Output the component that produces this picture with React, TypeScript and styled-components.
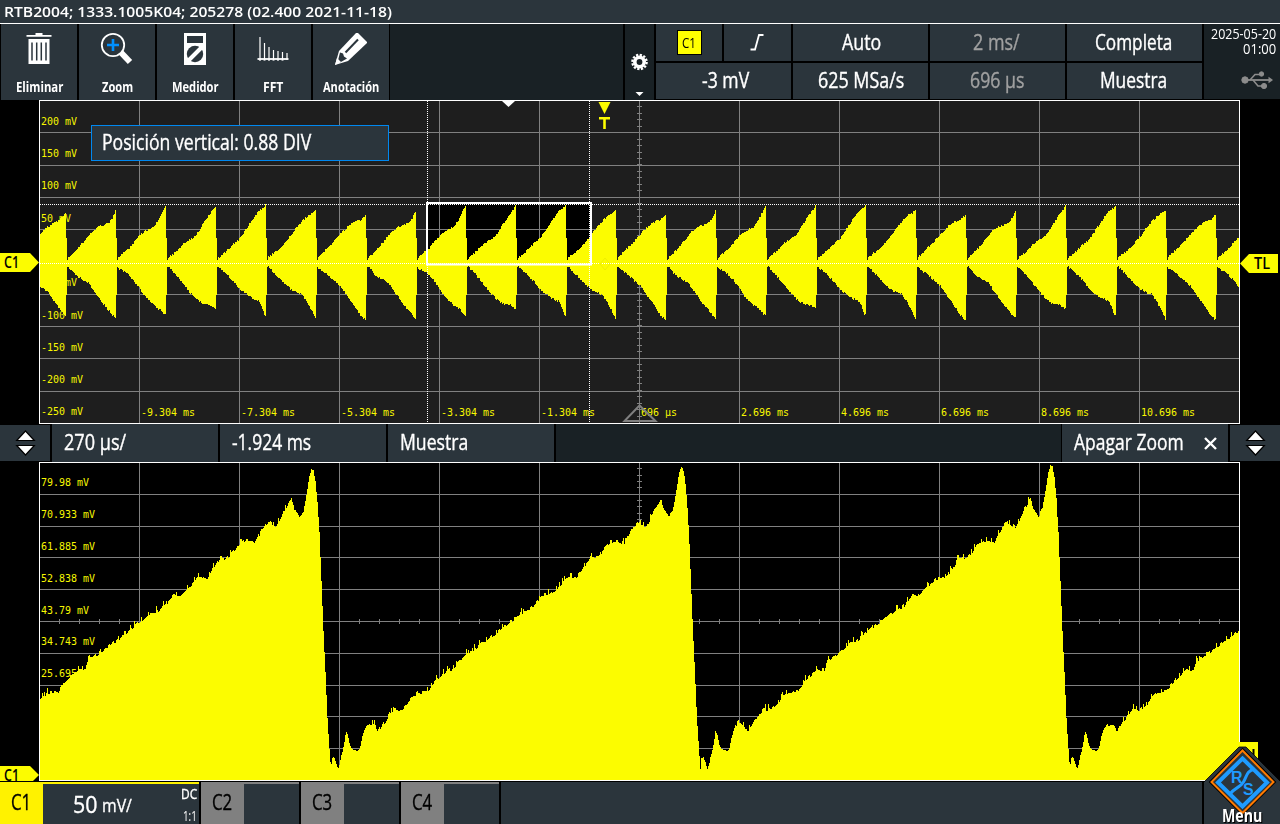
import React, { useLayoutEffect, useRef, useState } from "react";
import styled, { createGlobalStyle } from "styled-components";

const PANEL = "#2b353c";
const DARK = "#192125";
const YELLOW = "#fcfc00";
const GRID = "#808080";

const Global = createGlobalStyle`
  * { box-sizing: border-box; }
  body { margin: 0; background: #000; overflow: hidden; }
`;

/* ---------- text squeezed to a condensed width ---------- */

const FitBox = styled.span<{ $w: number; $size: number; $weight: number; $color: string }>`
  display: inline-block;
  flex: none;
  width: ${(p) => p.$w}px;
  height: ${(p) => p.$size}px;
  line-height: ${(p) => p.$size}px;
  font-family: "Open Sans", "Noto Sans", sans-serif;
  font-size: ${(p) => p.$size}px;
  font-weight: ${(p) => p.$weight};
  color: ${(p) => p.$color};
  white-space: nowrap;
  -webkit-text-stroke: ${(p) => (p.$weight === 500 ? 0.35 : 0)}px currentColor;
`;
const FitInner = styled.span`
  display: inline-block;
  transform-origin: 0 50%;
`;

function Fit({ w, size = 21, weight = 500, color = "#fff", children }: {
  w: number; size?: number; weight?: number; color?: string; children: string;
}) {
  const ref = useRef<HTMLSpanElement>(null);
  const [k, setK] = useState(1);
  useLayoutEffect(() => {
    if (ref.current) setK(w / ref.current.offsetWidth);
  }, [w, children]);
  return (
    <FitBox $w={w} $size={size} $weight={weight} $color={color}>
      <FitInner ref={ref} style={{ transform: `scaleX(${k})` }}>{children}</FitInner>
    </FitBox>
  );
}

/* ---------- layout ---------- */

const Screen = styled.div`
  position: relative;
  width: 1280px;
  height: 824px;
  display: flex;
  flex-direction: column;
  background: #000;
  overflow: hidden;
`;
const TitleBar = styled.header`
  flex: none;
  height: 24px;
  padding: 5px 0 0 4px;
  line-height: 0;
  background: ${PANEL};
  border-bottom: 1px solid #fff;
`;
const Toolbar = styled.div`
  flex: none;
  height: 76px;
  display: flex;
`;
const Tools = styled.div`
  display: flex;
  gap: 2px;
  padding-left: 1px;
`;
const Tool = styled.button`
  width: 76px;
  height: 76px;
  padding: 6px 0 0;
  border: 0;
  background: ${PANEL};
  display: flex;
  flex-direction: column;
  align-items: center;
  gap: 14px;
  line-height: 0;
`;
const Spacer = styled.div`
  width: 233px;
  margin-left: 1px;
  background: ${DARK};
`;
const GearButton = styled.div`
  width: 29px;
  margin: 0 2px;
  background: ${DARK};
`;
const Readouts = styled.div`
  display: grid;
  grid-template-columns: 66px 67px 135px 135px 135px;
  grid-template-rows: 37px 36px;
  gap: 2px;
`;
const Readout = styled.div<{ $span?: number; $shift?: number }>`
  grid-column: span ${(p) => p.$span ?? 1};
  padding: 0 2px 1px ${(p) => p.$shift ?? 0}px;
  background: ${PANEL};
  display: flex;
  align-items: center;
  justify-content: center;
`;
const Source = styled.span`
  width: 25px;
  height: 25px;
  display: flex;
  align-items: center;
  justify-content: center;
  background: #ff0;
  border: 1px solid #000;
`;
const Status = styled.div`
  flex: 1;
  height: 75px;
  margin-left: 2px;
  padding: 2px 4px 0 0;
  background: ${DARK};
  display: flex;
  flex-direction: column;
  align-items: flex-end;
`;
const UsbRow = styled.div`
  margin-top: 14px;
  margin-right: 2px;
`;
const Plot = styled.svg`
  display: block;
  flex: none;
`;
const ZoomBar = styled.div`
  flex: none;
  height: 38px;
  display: flex;
  gap: 2px;
`;
const ArrowCell = styled.div`
  width: 50px;
  height: 36px;
  margin-top: 1px;
  background: ${PANEL};
`;
const ZoomCell = styled.div<{ $left: number }>`
  width: 166px;
  padding: 0 0 2px ${(p) => p.$left}px;
  background: ${PANEL};
  display: flex;
  align-items: center;
`;
const ZoomFill = styled.div`
  flex: 1;
  margin-right: -1px;
  background: ${DARK};
`;
const CloseIcon = styled.svg`
  margin: 2px 0 0 20px;
`;
const Footer = styled.footer`
  flex: 1;
  padding-top: 1px;
  display: flex;
  gap: 2px;
`;
const Channel = styled.div<{ $color: string; $w: number }>`
  width: ${(p) => p.$w}px;
  display: flex;
  background: ${PANEL};
  border-top: 2px solid ${(p) => p.$color};
`;
const ChannelTag = styled.div<{ $color: string }>`
  width: 43px;
  padding: 0 2px 4px 0;
  background: ${(p) => p.$color};
  display: flex;
  align-items: center;
  justify-content: center;
`;
const Scale = styled.div`
  flex: 1;
  display: flex;
  align-items: center;
  gap: 5px;
  padding-left: 30px;
`;
const Unit = styled.span`
  display: flex;
  padding-top: 3px;
`;
const Coupling = styled.div`
  display: flex;
  flex-direction: column;
  align-items: flex-end;
  justify-content: space-between;
  padding: 2px 2px 1px 0;
`;
const FooterFill = styled.div`
  flex: 1;
  background: ${PANEL};
`;
const MenuCell = styled.div`
  width: 76px;
  background: ${PANEL};
`;
const MenuLogo = styled.svg`
  position: absolute;
  left: 1200px;
  top: 744px;
`;
const MenuLabel = styled.div`
  position: absolute;
  left: 1222px;
  top: 807px;
  line-height: 0;
  filter: drop-shadow(1px 1px 0 #000);
`;
const Popup = styled.div`
  position: absolute;
  left: 91px;
  top: 125px;
  width: 298px;
  height: 36px;
  padding: 0 0 2px 10px;
  display: flex;
  align-items: center;
  background: ${PANEL};
  border: 1px solid #0088f0;
`;

/* ---------- traces ---------- */

type Pt = [number, number];

const lerpAt = (pts: Pt[], x: number) => {
  if (x <= pts[0][0]) return pts[0][1];
  for (let i = 1; i < pts.length; i++) {
    if (x <= pts[i][0]) {
      const [x0, y0] = pts[i - 1];
      const [x1, y1] = pts[i];
      return y0 + ((y1 - y0) * (x - x0)) / (x1 - x0);
    }
  }
  return pts[pts.length - 1][1];
};
const noise = (n: number) => {
  const s = Math.sin(n * 127.1 + 11.7) * 43758.5453;
  return s - Math.floor(s);
};

/* upper and lower envelope of one burst, x measured from its start */
const BURSTS: { up: Pt[]; down: Pt[] }[] = [
  { up: [[1, 258], [8, 251], [16, 242], [23, 234], [30, 227], [36, 223], [41, 220], [46, 216], [49, 213]],
    down: [[1, 268], [8, 273], [16, 280], [23, 287], [30, 291], [36, 300], [43, 310], [49, 318]] },
  { up: [[1, 258], [8, 251], [16, 242], [23, 233], [30, 227], [36, 225], [41, 223], [45, 218], [48, 211]],
    down: [[1, 267], [8, 275], [16, 280], [21, 283], [28, 293], [35, 303], [41, 310], [46, 316], [48, 318]] },
  { up: [[1, 257], [11, 249], [21, 237], [28, 231], [36, 227], [41, 220], [46, 210], [48, 206]],
    down: [[1, 268], [8, 272], [16, 280], [21, 287], [28, 297], [36, 305], [43, 310], [47, 315]] },
  { up: [[1, 258], [8, 252], [16, 244], [23, 239], [28, 236], [35, 225], [41, 216], [46, 209], [48, 206]],
    down: [[1, 267], [8, 274], [15, 283], [23, 293], [30, 300], [36, 304], [43, 305], [48, 309]] },
  { up: [[1, 258], [8, 252], [15, 245], [23, 238], [28, 230], [35, 220], [41, 211], [46, 208], [48, 205]],
    down: [[1, 267], [8, 273], [16, 281], [23, 290], [30, 295], [36, 299], [41, 301], [44, 306], [47, 315]] },
  { up: [[1, 257], [8, 252], [16, 245], [23, 236], [28, 229], [35, 221], [41, 215], [46, 212], [48, 210]],
    down: [[1, 267], [8, 274], [16, 283], [23, 289], [28, 292], [34, 294], [39, 301], [44, 310], [48, 319]] },
  { up: [[1, 257], [8, 250], [16, 242], [23, 234], [30, 227], [36, 222], [43, 220], [48, 215]],
    down: [[1, 268], [8, 273], [16, 280], [23, 286], [28, 293], [35, 303], [43, 315], [48, 320]] },
];
const BURST_ORDER = [0, 1, 2, 3, 4, 5, 6, 1, 2, 3, 4, 5, 6, 1, 2, 3, 4, 5, 6, 1, 3, 4, 5, 6, 2];

function overviewPath() {
  let d = "";
  for (let x = 40; x < 1239; x++) {
    const i = Math.floor((x - 17) / 50);
    const u = x - 17 - i * 50;
    const b = BURSTS[BURST_ORDER[i]];
    let top = Math.round(lerpAt(b.up, u) + noise(x) * 2 - 1);
    let bot = Math.round(lerpAt(b.down, u) + noise(x + 5000) * 2 - 1);
    if (u === 49) {
      top = 238;
      bot = 295;
    }
    if (u === 0) {
      top = 260;
      bot = 267;
    }
    d += `M${x} ${top}h1V${bot}h-1z`;
  }
  return d;
}

const TOOTH: Pt[] = [
  [331, 769], [332, 758], [334, 757], [336, 762], [338, 769], [340, 763], [341, 757], [343, 750], [345, 739],
  [346, 731], [348, 735], [350, 745], [352, 749], [358, 751], [360, 748], [362, 738], [365, 728], [370, 724],
  [375, 725], [378, 731], [382, 725], [386, 720], [390, 713], [395, 709], [402, 709], [408, 704], [412, 697],
  [418, 692], [428, 691], [432, 685], [439, 677], [448, 670], [455, 669], [458, 660], [470, 652], [477, 647],
  [483, 642], [490, 638], [498, 632], [505, 625], [513, 620], [520, 614], [528, 610], [535, 605], [540, 598],
  [543, 594], [550, 595], [555, 590], [562, 583], [567, 578], [577, 577], [583, 568], [590, 557], [594, 558],
  [600, 555], [605, 548], [610, 542], [617, 540], [624, 543], [630, 532], [636, 523], [640, 522], [645, 528],
  [650, 520], [654, 510], [658, 504], [661, 499], [664, 508], [669, 517], [673, 512], [676, 495], [679, 476],
  [681, 469], [683, 470], [685, 481], [687, 502], [689, 532], [691, 581], [693, 631], [695, 672], [697, 718],
  [699, 749], [700.5, 769],
];

function zoomPath() {
  let d = "";
  for (let x = 40; x < 1239; x++) {
    let u = x + 0.5;
    let n = 0;
    while (u < 331) { u += 369.5; n--; }
    while (u >= 700.5) { u -= 369.5; n++; }
    let y = lerpAt(TOOTH, u);
    if (u > 365 && u < 665) {
      y += noise(Math.floor(x / 2)) * 3.5 - 1.5;
      if (noise(x + 900) > 0.88) y -= 4;
    }
    if (u > 670 && u < 688) y -= (n + 1) * 2;
    d += `M${x} ${Math.round(y)}h1V780h-1z`;
  }
  return d;
}

const V_LINES = Array.from({ length: 11 }, (_, i) => 139 + i * 100);
const TOP_ROWS = [132, 165, 197, 229, 262, 294, 326, 358, 391];
const LOW_ROWS = [494, 526, 557, 589, 621, 653, 685, 716, 748];
const TOP_Y: [string, number][] = [
  ["200 mV", 125], ["150 mV", 157], ["100 mV", 189], ["50 mV", 222], ["-50 mV", 286],
  ["-100 mV", 319], ["-150 mV", 351], ["-200 mV", 383], ["-250 mV", 415],
];
const TOP_X = [
  "-9.304 ms", "-7.304 ms", "-5.304 ms", "-3.304 ms", "-1.304 ms", "696 µs",
  "2.696 ms", "4.696 ms", "6.696 ms", "8.696 ms", "10.696 ms",
];
const LOW_Y: [string, number][] = [
  ["79.98 mV", 486], ["70.933 mV", 518], ["61.885 mV", 550], ["52.838 mV", 582],
  ["43.79 mV", 614], ["34.743 mV", 645], ["25.695 mV", 677],
];

function AxisLabel({ x, y, text }: { x: number; y: number; text: string }) {
  return (
    <text x={x} y={y} textLength={text.length * 6} lengthAdjust="spacingAndGlyphs"
      fontFamily='"DejaVu Sans Mono", monospace' fontSize={11} fill="#f8f800">{text}</text>
  );
}

function Grid({ rows, y0, y1 }: { rows: number[]; y0: number; y1: number }) {
  const step = (y1 - y0) / 50;
  return (
    <g fill={GRID} shapeRendering="crispEdges">
      {V_LINES.map((x) => <rect key={x} x={x} y={y0} width={1} height={y1 - y0} />)}
      {rows.map((y) => <rect key={y} x={40} y={y} width={1199} height={1} />)}
      {Array.from({ length: 49 }, (_, i) => (
        <rect key={i} x={637} y={Math.round(y0 + (i + 1) * step) - 1} width={5} height={1} />
      ))}
      {Array.from({ length: 59 }, (_, i) => (
        <rect key={i} x={59 + i * 20} y={rows[4] - 2} width={1} height={5} />
      ))}
    </g>
  );
}

function Marker({ text, x, y, w }: { text: string; x: number; y: number; w: number }) {
  return (
    <text x={x} y={y} textLength={w} lengthAdjust="spacingAndGlyphs"
      fontFamily='"Open Sans", sans-serif' fontWeight={600} fontSize={16} fill="#000">{text}</text>
  );
}

function Overview() {
  return (
    <Plot width="1280" height="324" viewBox="0 100 1280 324">
      <rect x="39.5" y="100.5" width="1200" height="323" fill="#1e1e1e" stroke="#fff" />
      <rect x="427" y="203" width="164" height="61" fill="#000" />
      <Grid rows={TOP_ROWS} y0={101} y1={423} />
      {TOP_Y.map(([t, y]) => <AxisLabel key={t} x={41} y={y} text={t} />)}
      {TOP_X.map((t, i) => <AxisLabel key={t} x={141 + i * 100} y={416} text={t} />)}
      <path d={overviewPath()} fill={YELLOW} shapeRendering="crispEdges" />
      <g stroke="#fff" strokeDasharray="1 1" shapeRendering="crispEdges">
        <path d="M40 204.5H1239M40 263.5H1239M427.5 101V423M589.5 101V423" />
      </g>
      <rect x="427" y="203" width="164" height="61.5" fill="none" stroke="#fff" strokeWidth="2" />
      <path d="M605 258l5 6-5 6-5-6z" fill="none" stroke="#efef00" />
      <path d="M502 101h13l-6.500 6z" fill="#fff" />
      <path d="M598.500 102h12l-6 12z" fill={YELLOW} />
      <path d="M599 118.300h11M604.500 118v11" stroke={YELLOW} strokeWidth="2.600" fill="none" />
      <path d="M639.500 405.500l-15 15.500h31z" fill="none" stroke={GRID} strokeWidth="2" />
      <path d="M0 253h30l9 9.500-9 9.500H0z" fill={YELLOW} />
      <Marker text="C1" x={4} y={268} w={15} />
      <path d="M1278 254h-29l-9 9.500 9 9.500h29z" fill={YELLOW} />
      <Marker text="TL" x={1254} y={269} w={16} />
    </Plot>
  );
}

function ZoomPlot() {
  return (
    <Plot width="1280" height="319" viewBox="0 462 1280 319">
      <rect x="39.5" y="462.5" width="1200" height="318" fill="#000" stroke="#fff" />
      <Grid rows={LOW_ROWS} y0={463} y1={780} />
      {LOW_Y.map(([t, y]) => <AxisLabel key={t} x={41} y={y} text={t} />)}
      <path d={zoomPath()} fill={YELLOW} shapeRendering="crispEdges" />
      <path d="M0 766h30l9 9-6 6H0z" fill={YELLOW} />
      <Marker text="C1" x={4} y={781} w={15} />
      <path d="M1239 742h19v39h-19z" fill={YELLOW} />
      <path d="M1253.500 749v12" stroke="#000" strokeWidth="2" />
    </Plot>
  );
}

/* ---------- icons ---------- */

const TrashIcon = () => (
  <svg width="32" height="36" viewBox="0 0 32 36" fill="#fff">
    <path d="M12.500 3h7v2h9v1.800h-25V5h9z" />
    <path d="M5.500 9h21v25h-21z" />
    <path d="M9 12.500v18M13.700 12.500v18M18.300 12.500v18M23 12.500v18" stroke={PANEL} strokeWidth="1.500" />
  </svg>
);
const MagnifierIcon = () => (
  <svg width="34" height="36" viewBox="0 0 34 36">
    <path d="M20.500 22l9.500 10" stroke="#fff" strokeWidth="6" />
    <circle cx="13" cy="15" r="11.200" fill={PANEL} stroke="#fff" strokeWidth="1.800" />
    <path d="M13 9v12M7 15h12" stroke="#0090ff" strokeWidth="2.600" />
  </svg>
);
const MeterIcon = () => (
  <svg width="32" height="36" viewBox="0 0 32 36">
    <path d="M5 3h22v32H5z" fill="#fff" />
    <path d="M8 6h16v7H8z" fill={PANEL} />
    <circle cx="16" cy="24" r="8.200" fill={PANEL} />
    <path d="M9 31l14-14" stroke="#fff" strokeWidth="4" />
  </svg>
);
const FftIcon = () => (
  <svg width="34" height="36" viewBox="0 0 34 36" fill="none" stroke="#fff">
    <path d="M1.500 29h31" strokeWidth="1.800" />
    <path d="M4 7v23M8.500 13v17M13 17v13M17.500 20v10M22 21v9M26.500 22v8M31 23v7" strokeWidth="1.200" />
    <path d="M3 30.500h2M7.500 30.500h2M12 30.500h2M16.500 30.500h2M21 30.500h2M25.500 30.500h2" opacity=".6" />
  </svg>
);
const PencilIcon = () => (
  <svg width="34" height="36" viewBox="0 0 34 36">
    <path d="M1 35l4-14L22 3h2l9 9v1L14 31z" fill="#fff" />
    <path d="M6 22.500l3 1 1 3 3 2-7 4-2-2z" fill={PANEL} />
    <path d="M1 35l2-7 4 4z" fill="#fff" />
    <path d="M11.500 22.500L24 9.500" stroke={PANEL} strokeWidth="2" />
  </svg>
);
const GearIcon = () => (
  <svg width="29" height="76" viewBox="625 24 29 76">
    <circle cx="639.500" cy="62" r="4.700" fill="none" stroke="#fff" strokeWidth="3.600" />
    <circle cx="639.500" cy="62" r="7.200" fill="none" stroke="#fff" strokeWidth="2.200" strokeDasharray="2.260 1.510" />
    <path d="M635.500 92h8l-4 4z" fill="#fff" />
  </svg>
);
const EdgeIcon = () => (
  <svg width="14" height="18" viewBox="0 0 14 18" fill="none" stroke="#fff" strokeWidth="1.800">
    <path d="M.500 16.500h4.500L9 2h4.500" />
  </svg>
);
const UsbIcon = () => (
  <svg width="34" height="20" viewBox="0 0 34 20" fill="#8c8c8c" stroke="#8c8c8c">
    <circle cx="5" cy="10" r="3.200" />
    <path d="M5 10h24" strokeWidth="1.800" />
    <path d="M28.500 6.800v6.400l4.500-3.200z" stroke="none" />
    <path d="M10 10l5-5.500h5M13 10l5 6h4" fill="none" strokeWidth="1.600" />
    <circle cx="21.500" cy="4" r="2.200" />
    <circle cx="24" cy="16" r="2.600" />
  </svg>
);
const UpDown = ({ x }: { x: number }) => (
  <svg width="50" height="36" viewBox="0 0 50 36" fill="#fff" stroke="#000" strokeWidth="1.200">
    <path d={`M${x} 6l8.800 9.500h-17.600z`} />
    <path d={`M${x} 30l8.800-9.500h-17.600z`} />
  </svg>
);

function Logo() {
  return (
    <MenuLogo width="80" height="80" viewBox="1200 744 80 80">
      <path d="M1239 747h7l34 34v10h-75v-10z" fill={PANEL} />
      <path d="M1205 781l34-34h7l34 34" fill="none" stroke="#000" strokeWidth=".8" />
      <path d="M1242.500 750.500l31 31.500-31 31-31-31z" fill="#2b353c" stroke="#000" strokeWidth="4" />
      <path d="M1242.500 750.500l31 31.500-31 31-31-31z" fill="#2b353c" stroke="#ff7a00" strokeWidth="2" />
      <path d="M1242.500 758.500l24.500 24-24.500 24-24.500-24z" fill="none" stroke="#1e9bff" strokeWidth="4" />
      <path d="M1229 795c6-8 11-7 14.500-13s3-11 11-13" fill="none" stroke="#1e9bff" strokeWidth="3" />
      <g fill="#1e9bff" fontFamily='"Liberation Sans", Arial, sans-serif' fontSize="16" fontWeight="700">
        <text x="1231" y="783">R</text>
        <text x="1243" y="795">S</text>
      </g>
    </MenuLogo>
  );
}

/* ---------- screen ---------- */

const TOOLS: [string, number, () => React.JSX.Element][] = [
  ["Eliminar", 47, TrashIcon],
  ["Zoom", 31, MagnifierIcon],
  ["Medidor", 47, MeterIcon],
  ["FFT", 20, FftIcon],
  ["Anotación", 56, PencilIcon],
];

export default function App() {
  return (
    <Screen>
      <Global />
      <TitleBar>
        <Fit w={388} size={14} weight={600}>RTB2004; 1333.1005K04; 205278 (02.400 2021-11-18)</Fit>
      </TitleBar>
      <Toolbar>
        <Tools>
          {TOOLS.map(([label, w, Icon]) => (
            <Tool key={label}>
              <Icon />
              <Fit w={w} size={14} weight={700}>{label}</Fit>
            </Tool>
          ))}
        </Tools>
        <Spacer />
        <GearButton><GearIcon /></GearButton>
        <Readouts>
          <Readout $shift={2}><Source><Fit w={14} size={15} weight={400} color="#000">C1</Fit></Source></Readout>
          <Readout><EdgeIcon /></Readout>
          <Readout $shift={3}><Fit w={39}>Auto</Fit></Readout>
          <Readout><Fit w={47} color="#a0a0a0">2 ms/</Fit></Readout>
          <Readout><Fit w={77}>Completa</Fit></Readout>
          <Readout $span={2} $shift={5}><Fit w={47}>-3 mV</Fit></Readout>
          <Readout $shift={2}><Fit w={86}>625 MSa/s</Fit></Readout>
          <Readout><Fit w={54} color="#a0a0a0">696 µs</Fit></Readout>
          <Readout><Fit w={67}>Muestra</Fit></Readout>
        </Readouts>
        <Status>
          <Fit w={65} size={15} weight={400}>2025-05-20</Fit>
          <Fit w={33} size={15} weight={400}>01:00</Fit>
          <UsbRow><UsbIcon /></UsbRow>
        </Status>
      </Toolbar>
      <Overview />
      <ZoomBar>
        <ArrowCell><UpDown x={25.5} /></ArrowCell>
        <ZoomCell $left={12}><Fit w={62}>270 µs/</Fit></ZoomCell>
        <ZoomCell $left={12}><Fit w={79}>-1.924 ms</Fit></ZoomCell>
        <ZoomCell $left={12}><Fit w={68}>Muestra</Fit></ZoomCell>
        <ZoomFill />
        <ZoomCell $left={12}>
          <Fit w={110}>Apagar Zoom</Fit>
          <CloseIcon width="13" height="13" viewBox="0 0 13 13">
            <path d="M1 1l11 11M12 1L1 12" stroke="#fff" strokeWidth="2.400" />
          </CloseIcon>
        </ZoomCell>
        <ArrowCell><UpDown x={25.5} /></ArrowCell>
      </ZoomBar>
      <ZoomPlot />
      <Footer>
        <Channel $color="#fff200" $w={199}>
          <ChannelTag $color="#fff200"><Fit w={20} color="#000">C1</Fit></ChannelTag>
          <Scale>
            <Fit w={24} size={24}>50</Fit>
            <Unit><Fit w={30} size={19}>mV/</Fit></Unit>
          </Scale>
          <Coupling>
            <Fit w={16} size={15}>DC</Fit>
            <Fit w={14} size={14} weight={400}>1:1</Fit>
          </Coupling>
        </Channel>
        {["C2", "C3", "C4"].map((c) => (
          <Channel key={c} $color="#808080" $w={98}>
            <ChannelTag $color="#808080"><Fit w={20} color="#000">{c}</Fit></ChannelTag>
          </Channel>
        ))}
        <FooterFill />
        <MenuCell />
      </Footer>
      <Popup><Fit w={209}>Posición vertical: 0.88 DIV</Fit></Popup>
      <Logo />
      <MenuLabel><Fit w={40} size={17} weight={700}>Menu</Fit></MenuLabel>
    </Screen>
  );
}
